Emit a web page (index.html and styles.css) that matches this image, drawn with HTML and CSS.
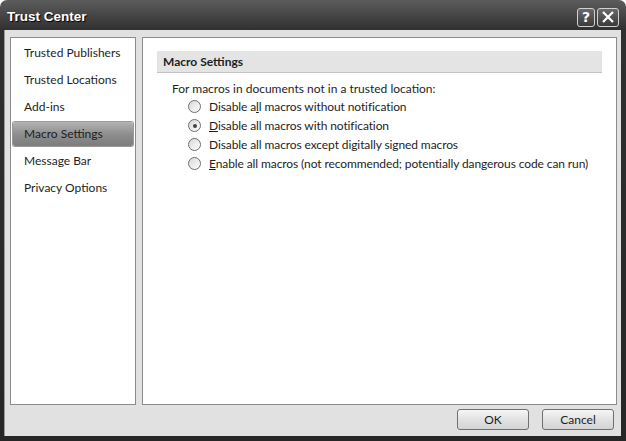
FILE: index.html
```html
<!DOCTYPE html>
<html lang="en">
<head>
    <meta charset="UTF-8">
    <title>Trust Center</title>
    <link rel="stylesheet" href="styles.css">
</head>
<body>
    <div class="window">
        <div class="titlebar">
            <span class="title">Trust Center</span>
            <div class="caption-buttons">
                <span class="cap-btn help">?</span>
                <span class="cap-btn close">
                    <svg width="14" height="14" viewBox="0 0 14 14"><path d="M2 2 L12 12 M12 2 L2 12" stroke="#fff" stroke-width="2.2" fill="none"/></svg>
                </span>
            </div>
        </div>

        <div class="dialog">
            <div class="panes">
                <!-- Category list -->
                <ul class="nav">
                    <li>Trusted Publishers</li>
                    <li>Trusted Locations</li>
                    <li>Add-ins</li>
                    <li class="active">Macro Settings</li>
                    <li>Message Bar</li>
                    <li>Privacy Options</li>
                </ul>

                <!-- Settings page -->
                <div class="content">
                    <h3 class="section-title">Macro Settings</h3>
                    <p class="intro">For macros in documents not in a trusted location:</p>
                    <div class="options">
                        <label class="option"><span class="radio"></span><span>Disable a<u>l</u>l macros without notification</span></label>
                        <label class="option"><span class="radio checked"></span><span><u>D</u>isable all macros with notification</span></label>
                        <label class="option"><span class="radio"></span><span>Disable all macros except di<u>g</u>itally signed macros</span></label>
                        <label class="option"><span class="radio"></span><span><u>E</u>nable all macros (not recommended; potentially dangerous code can run)</span></label>
                    </div>
                </div>
            </div>

            <div class="footer">
                <button class="btn">OK</button>
                <button class="btn">Cancel</button>
            </div>
        </div>
    </div>
</body>
</html>
```

FILE: styles.css
```css
:root {
    --frame-color: #2e2e2e;
    --dialog-bg: #e1e1e1;
    --pane-border: #8c8c8c;
    --text-color: #1e1e1e;
}

body {
    margin: 0;
    background-color: #ffffff;
    font-family: Lato, "Noto Sans", sans-serif;
    font-size: 12px;
    color: var(--text-color);
}

.window {
    width: 626px;
    height: 441px;
    box-sizing: border-box;
    background: linear-gradient(#5c5c5c, #303030 30px, #262626);
    border-radius: 7px 7px 0 0;
    padding: 0 5px 5px 4px;
    display: flex;
    flex-direction: column;
}

.titlebar {
    height: 30px;
    display: flex;
    align-items: center;
    justify-content: space-between;
    padding: 0 2px 0 3px;
}

.title {
    color: #ffffff;
    font-family: "Liberation Sans", Arial, sans-serif;
    font-weight: bold;
    font-size: 13.5px;
    text-shadow: 1px 1px 1px #000;
    margin-top: 2px;
}

.caption-buttons {
    display: flex;
    gap: 2px;
    margin-top: 4px;
}

.cap-btn {
    width: 16px;
    height: 17px;
    border: 1px solid #d0d0d0;
    border-radius: 3px;
    background: linear-gradient(#6a6a6a, #3a3a3a);
    color: #ffffff;
    font-family: "DejaVu Sans", sans-serif;
    font-weight: bold;
    font-size: 14px;
    display: flex;
    align-items: center;
    justify-content: center;
}

.cap-btn.close {
    width: 20px;
}

.dialog {
    flex: 1;
    background-color: var(--dialog-bg);
    border-left: 1px solid #9a9a9a;
    padding: 7px 4px 6px 5px;
    display: flex;
    flex-direction: column;
}

.panes {
    flex: 1;
    display: flex;
    gap: 6px;
}

.nav {
    list-style: none;
    margin: 0;
    padding: 3px 2px;
    width: 120px;
    background-color: #ffffff;
    border: 1px solid var(--pane-border);
}

.nav li {
    height: 24px;
    line-height: 24px;
    padding-left: 11px;
    margin-bottom: 3px;
    border-radius: 2px;
}

.nav li.active {
    background: linear-gradient(#b4b4b4, #8e8e8e 50%, #7c7c7c);
    box-shadow: 0 0 0 1px #9a9a9a;
}

.content {
    flex: 1;
    background-color: #ffffff;
    border: 1px solid var(--pane-border);
    padding: 13px 14px 0 14px;
}

.section-title {
    margin: 0;
    height: 21px;
    line-height: 21px;
    padding-left: 6px;
    background-color: #e4e4e4;
    border-bottom: 1px solid #c4c4c4;
    font-size: 12px;
    font-weight: bold;
}

.intro {
    margin: 8px 0 0 15px;
    line-height: 16px;
}

.options {
    padding-left: 31px;
    letter-spacing: -0.1px;
}

.option {
    display: flex;
    align-items: center;
    height: 19px;
    gap: 8px;
    white-space: nowrap;
}

.radio {
    flex: none;
    width: 11px;
    height: 11px;
    border: 1px solid #6e6e6e;
    border-radius: 50%;
    background: linear-gradient(135deg, #d8d8d8, #ffffff);
    display: flex;
    align-items: center;
    justify-content: center;
}

.radio.checked::after {
    content: "";
    width: 4px;
    height: 4px;
    border-radius: 50%;
    background-color: #444;
}

.footer {
    display: flex;
    justify-content: flex-end;
    gap: 13px;
    padding-top: 4px;
    padding-right: 3px;
}

.btn {
    width: 72px;
    height: 21px;
    border: 1px solid #707070;
    border-radius: 3px;
    background: linear-gradient(#f6f6f6, #e2e2e2 50%, #d4d4d4);
    font-family: inherit;
    font-size: 12px;
    color: var(--text-color);
    padding: 0;
}
```
